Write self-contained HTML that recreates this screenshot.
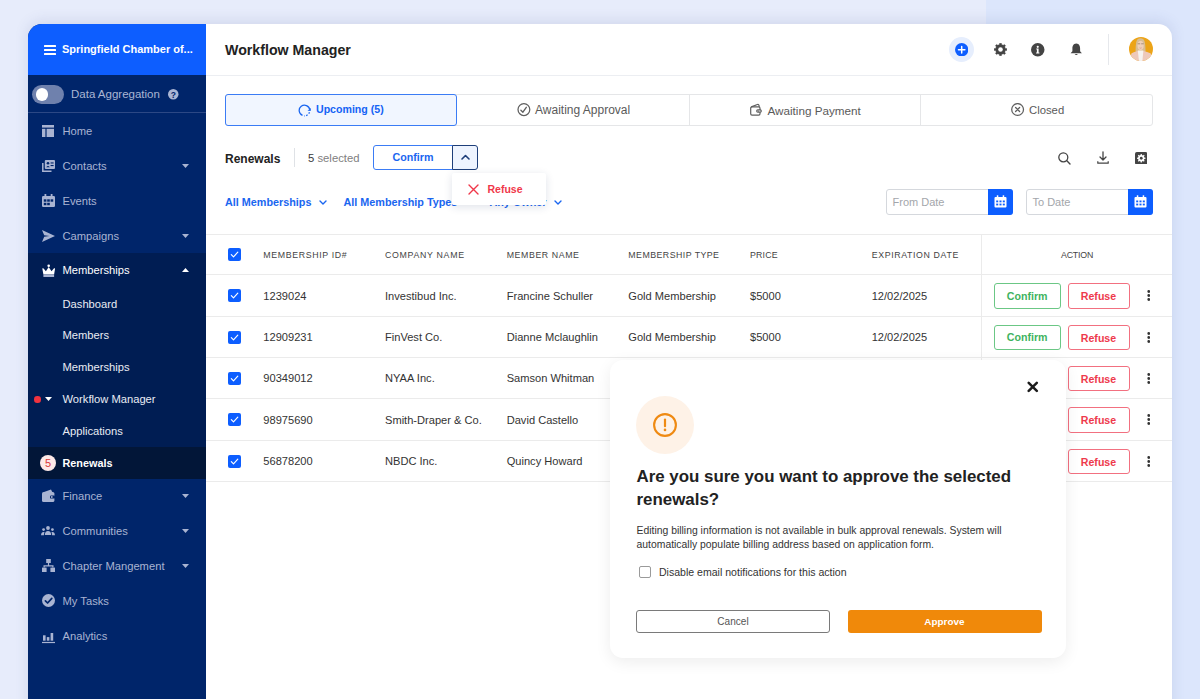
<!DOCTYPE html>
<html><head><meta charset="utf-8">
<style>
*{box-sizing:border-box;margin:0;padding:0}
html,body{width:1200px;height:699px;overflow:hidden}
body{font-family:"Liberation Sans",sans-serif;position:relative;background:#e7ecfb}
.a{position:absolute;display:block}
.t{position:absolute;white-space:nowrap;line-height:1}
</style></head><body>
<div class="a" style="left:0px;top:0px;width:1200px;height:699px;background:#e7ecfb"></div>
<div class="a" style="left:986px;top:0px;width:214px;height:699px;background:#dce6fc"></div>
<div class="a" style="left:28px;top:24px;width:1144px;height:700px;background:#fff;border-radius:14px;box-shadow:0 -3px 14px rgba(60,80,140,.13)"></div>
<div class="a" style="left:28px;top:24px;width:178px;height:700px;background:#00256a;border-top-left-radius:14px"></div>
<div class="a" style="left:28px;top:24px;width:178px;height:51px;background:#0d5eff;border-top-left-radius:14px"></div>
<div class="a" style="left:44px;top:45px;width:12px;height:2.4px;background:#fff;border-radius:0.5px"></div>
<div class="a" style="left:44px;top:49px;width:12px;height:2.4px;background:#fff;border-radius:0.5px"></div>
<div class="a" style="left:44px;top:53px;width:12px;height:2.4px;background:#fff;border-radius:0.5px"></div>
<div class="t" style="left:62px;top:44.19px;font-size:11px;color:#fff;font-weight:bold;">Springfield Chamber of...</div>
<div class="a" style="left:32px;top:84.5px;width:32px;height:19px;background:#6f81ad;border-radius:10px"></div>
<div class="a" style="left:35.5px;top:88px;width:12.5px;height:12.5px;background:#fff;border-radius:50%"></div>
<div class="t" style="left:71px;top:88.77px;font-size:11.5px;color:#aab6d4;font-weight:normal;">Data Aggregation</div>
<svg class="a" style="left:168px;top:89px;" width="10.5" height="10.5" viewBox="0 0 10.5 10.5"><circle cx="5.25" cy="5.25" r="5.25" fill="#aab6d4"/><text x="5.25" y="8.6" font-size="8.5" font-weight="bold" text-anchor="middle" fill="#00236b" font-family="Liberation Sans">?</text></svg>
<div class="a" style="left:28px;top:112px;width:178px;height:1px;background:#2c4885"></div>
<div class="a" style="left:28px;top:253px;width:178px;height:194px;background:#001d53"></div>
<div class="a" style="left:28px;top:447px;width:178px;height:32px;background:#021638"></div>
<svg class="a" style="left:42px;top:124.5px;" width="12" height="12" viewBox="0 0 12 12"><rect x="0" y="0" width="12" height="2.6" fill="#a9b4d2"/><rect x="0" y="3.8" width="3.4" height="8.2" fill="#a9b4d2"/><rect x="4.6" y="3.8" width="7.4" height="8.2" fill="#a9b4d2"/></svg>
<div class="t" style="left:62.5px;top:125.52px;font-size:11.2px;color:#a9b4d2;font-weight:normal;">Home</div>
<svg class="a" style="left:41.5px;top:159.5px;" width="13" height="12" viewBox="0 0 13 12"><path d="M0.8 3 V11.2 H9.5" stroke="#a9b4d2" stroke-width="1.5" fill="none"/><rect x="2.8" y="0" width="10.2" height="9" rx="1" fill="#a9b4d2"/><circle cx="6" cy="3.3" r="1.3" fill="#00256a"/><path d="M4.2 7.2 Q6 4.8 7.8 7.2Z" fill="#00256a"/><rect x="8.6" y="2.4" width="3" height="1.1" fill="#00256a"/><rect x="8.6" y="5" width="3" height="1.1" fill="#00256a"/></svg>
<div class="t" style="left:62.5px;top:160.52px;font-size:11.2px;color:#a9b4d2;font-weight:normal;">Contacts</div>
<svg class="a" style="left:41.5px;top:194.0px;" width="13" height="13" viewBox="0 0 13 13"><rect x="0" y="2" width="13" height="11" rx="1.2" fill="#a9b4d2"/><rect x="2.5" y="0" width="1.8" height="3.5" fill="#a9b4d2"/><rect x="8.7" y="0" width="1.8" height="3.5" fill="#a9b4d2"/><g fill="#00256a"><rect x="1.8" y="5.3" width="2.6" height="2.4"/><rect x="5.2" y="5.3" width="2.6" height="2.4"/><rect x="8.6" y="5.3" width="2.6" height="2.4"/><rect x="1.8" y="8.8" width="2.6" height="2.4"/><rect x="5.2" y="8.8" width="2.6" height="2.4"/></g></svg>
<div class="t" style="left:62.5px;top:195.52px;font-size:11.2px;color:#a9b4d2;font-weight:normal;">Events</div>
<svg class="a" style="left:41.5px;top:229.5px;" width="13" height="12" viewBox="0 0 13 12"><path d="M0 0 L13 6 L0 12 L2.2 6.8 L7.5 6 L2.2 5.2 Z" fill="#a9b4d2"/></svg>
<div class="t" style="left:62.5px;top:230.52px;font-size:11.2px;color:#a9b4d2;font-weight:normal;">Campaigns</div>
<svg class="a" style="left:181.5px;top:163.5px;" width="7" height="4" viewBox="0 0 7 4"><path d="M0 0 L3.5 4 L7 0Z" fill="#a9b4d2"/></svg>
<svg class="a" style="left:181.5px;top:233.5px;" width="7" height="4" viewBox="0 0 7 4"><path d="M0 0 L3.5 4 L7 0Z" fill="#a9b4d2"/></svg>
<svg class="a" style="left:41.5px;top:263.5px;" width="13.5" height="13.5" viewBox="0 0 13.5 13.5"><path d="M0.3 4.4 Q1 4 1.6 4.6 L3.9 7.2 L6.7 3.1 L9.5 7.2 L11.8 4.6 Q12.4 4 13.1 4.4 L12.1 10.6 H1.4 Z" fill="#fff"/><circle cx="6.7" cy="1.8" r="1.3" fill="#fff"/><rect x="1.4" y="10.6" width="10.7" height="2.8" fill="#a9b4d2"/></svg>
<div class="t" style="left:62.5px;top:265.02px;font-size:11.2px;color:#fff;font-weight:normal;">Memberships</div>
<svg class="a" style="left:181.5px;top:267.5px;" width="7" height="4" viewBox="0 0 7 4"><path d="M0 4 L3.5 0 L7 4Z" fill="#fff"/></svg>
<div class="t" style="left:62.5px;top:298.52px;font-size:11.2px;color:#e9ecf3;font-weight:normal;">Dashboard</div>
<div class="t" style="left:62.5px;top:330.02px;font-size:11.2px;color:#e9ecf3;font-weight:normal;">Members</div>
<div class="t" style="left:62.5px;top:362.02px;font-size:11.2px;color:#e9ecf3;font-weight:normal;">Memberships</div>
<div class="t" style="left:62.5px;top:393.52px;font-size:11.2px;color:#e9ecf3;font-weight:normal;">Workflow Manager</div>
<div class="t" style="left:62.5px;top:425.52px;font-size:11.2px;color:#e9ecf3;font-weight:normal;">Applications</div>
<div class="a" style="left:34px;top:396px;width:6.5px;height:6.5px;background:#f0333f;border-radius:50%"></div>
<svg class="a" style="left:44.8px;top:397px;" width="7" height="4" viewBox="0 0 7 4"><path d="M0 0 L3.5 4 L7 0Z" fill="#fff"/></svg>
<div class="a" style="left:40px;top:455px;width:16px;height:16px;background:#fde9e8;border-radius:50%"></div>
<div class="t" style="left:-252px;width:600px;text-align:center;top:457.69px;font-size:11px;color:#d93a3a;font-weight:normal;">5</div>
<div class="t" style="left:62.5px;top:457.82px;font-size:10.85px;color:#fff;font-weight:bold;">Renewals</div>
<svg class="a" style="left:41.5px;top:489.0px;" width="13" height="13" viewBox="0 0 13 13"><path d="M2 3 L9 0.5 L10.3 3Z" fill="#a9b4d2"/><rect x="0" y="3" width="12.4" height="10" rx="1.6" fill="#a9b4d2"/><rect x="8" y="6.4" width="5" height="3.2" rx="1.2" fill="#00256a"/><circle cx="9.8" cy="8" r="0.9" fill="#a9b4d2"/></svg>
<div class="t" style="left:62.5px;top:490.52px;font-size:11.2px;color:#a9b4d2;font-weight:normal;">Finance</div>
<svg class="a" style="left:41px;top:525.5px;" width="14" height="10" viewBox="0 0 14 10"><g fill="#a9b4d2"><circle cx="7" cy="2" r="1.9"/><circle cx="2.6" cy="3.6" r="1.4"/><circle cx="11.4" cy="3.6" r="1.4"/><path d="M3.8 9 Q4 5 7 5 Q10 5 10.2 9Z"/><path d="M0 9.2 Q0.3 6 2.6 6 Q3.6 6 3.6 6.6 Q2.8 7.6 2.9 9.2Z"/><path d="M14 9.2 Q13.7 6 11.4 6 Q10.4 6 10.4 6.6 Q11.2 7.6 11.1 9.2Z"/></g></svg>
<div class="t" style="left:62.5px;top:525.52px;font-size:11.2px;color:#a9b4d2;font-weight:normal;">Communities</div>
<svg class="a" style="left:41.5px;top:559.0px;" width="13" height="13" viewBox="0 0 13 13"><g fill="#a9b4d2"><rect x="4.2" y="0" width="4.6" height="4"/><rect x="0" y="8.6" width="4.6" height="4.4"/><rect x="8.4" y="8.6" width="4.6" height="4.4"/><path d="M5.9 4 h1.2 v2.2 h4.4 v2.4 h-1.2 v-1.2 h-7.6 v1.2 h-1.2 v-2.4 h4.4z"/></g></svg>
<div class="t" style="left:62.5px;top:560.52px;font-size:11.2px;color:#a9b4d2;font-weight:normal;">Chapter Mangement</div>
<svg class="a" style="left:41.5px;top:594.0px;" width="13" height="13" viewBox="0 0 13 13"><circle cx="6.5" cy="6.5" r="6.5" fill="#a9b4d2"/><path d="M3.4 6.8 L5.6 9 L9.8 4.4" stroke="#00256a" stroke-width="1.7" fill="none" stroke-linecap="round" stroke-linejoin="round"/></svg>
<div class="t" style="left:62.5px;top:595.52px;font-size:11.2px;color:#a9b4d2;font-weight:normal;">My Tasks</div>
<svg class="a" style="left:41.5px;top:629.5px;" width="13" height="14" viewBox="0 0 13 14"><g fill="#a9b4d2"><rect x="1" y="5.3" width="2.6" height="5.4"/><rect x="4.8" y="7.1" width="2.6" height="3.6"/><rect x="8.6" y="3" width="2.6" height="7.7"/><rect x="0" y="11.9" width="13" height="1.2"/></g></svg>
<div class="t" style="left:62.5px;top:630.52px;font-size:11.2px;color:#a9b4d2;font-weight:normal;">Analytics</div>
<svg class="a" style="left:181.5px;top:493.5px;" width="7" height="4" viewBox="0 0 7 4"><path d="M0 0 L3.5 4 L7 0Z" fill="#a9b4d2"/></svg>
<svg class="a" style="left:181.5px;top:528.5px;" width="7" height="4" viewBox="0 0 7 4"><path d="M0 0 L3.5 4 L7 0Z" fill="#a9b4d2"/></svg>
<svg class="a" style="left:181.5px;top:563.5px;" width="7" height="4" viewBox="0 0 7 4"><path d="M0 0 L3.5 4 L7 0Z" fill="#a9b4d2"/></svg>
<div class="t" style="left:225px;top:42.98px;font-size:14.2px;color:#222;font-weight:bold;">Workflow Manager</div>
<div class="a" style="left:206px;top:75px;width:966px;height:1px;background:#eceef2"></div>
<div class="a" style="left:949px;top:37px;width:25px;height:25px;background:#e6eefd;border-radius:50%"></div>
<svg class="a" style="left:955px;top:43px;" width="13.4" height="13.4" viewBox="0 0 13.4 13.4"><circle cx="6.7" cy="6.7" r="6.7" fill="#0d5eff"/><path d="M6.7 3.5 V9.9 M3.5 6.7 H9.9" stroke="#fff" stroke-width="1.5" stroke-linecap="round"/></svg>
<svg class="a" style="left:993.5px;top:43px;" width="13" height="13" viewBox="0 0 13 13"><path d="M11.38,5.43 L12.84,5.62 L12.84,7.38 L11.38,7.57 L10.71,9.20 L11.60,10.36 L10.36,11.60 L9.20,10.71 L7.57,11.38 L7.38,12.84 L5.62,12.84 L5.43,11.38 L3.80,10.71 L2.64,11.60 L1.40,10.36 L2.29,9.20 L1.62,7.57 L0.16,7.38 L0.16,5.62 L1.62,5.43 L2.29,3.80 L1.40,2.64 L2.64,1.40 L3.80,2.29 L5.43,1.62 L5.62,0.16 L7.38,0.16 L7.57,1.62 L9.20,2.29 L10.36,1.40 L11.60,2.64 L10.71,3.80Z" fill="#444" stroke="#444" stroke-width="0.4" stroke-linejoin="round"/><circle cx="6.5" cy="6.5" r="2.3" fill="#fff"/></svg>
<svg class="a" style="left:1031px;top:43px;" width="13.5" height="13.5" viewBox="0 0 13.5 13.5"><circle cx="6.75" cy="6.75" r="6.75" fill="#444"/><circle cx="6.75" cy="3.8" r="1.1" fill="#fff"/><path d="M5.3 5.6 H7.6 V9.6 H8.4 V10.6 H5.1 V9.6 H5.9 V6.6 H5.3Z" fill="#fff"/></svg>
<svg class="a" style="left:1070px;top:43px;" width="12.5" height="12.5" viewBox="0 0 12.5 12.5"><path d="M6.25 0.5 C3.2 0.8 2.4 3 2.4 5.5 V8.2 L0.6 10.3 H11.9 L10.1 8.2 V5.5 C10.1 3 9.3 0.8 6.25 0.5Z" fill="#444"/><path d="M4.6 11 Q6.25 13 7.9 11Z" fill="#444"/></svg>
<div class="a" style="left:1108px;top:34px;width:1px;height:31px;background:#e6e8ec"></div>
<svg class="a" style="left:1128.5px;top:37px;" width="24.2" height="24.2" viewBox="0 0 24.2 24.2"><defs><clipPath id="av"><circle cx="12" cy="12" r="12"/></clipPath></defs><g clip-path="url(#av)"><rect width="24" height="24" fill="#eca418"/><path d="M6.8 19 Q6 6 8.3 2.6 Q11.5 -0.2 14.7 2.6 Q17 6 16.4 19 Z" fill="#d8bd92"/><path d="M1.5 24 L2.3 16.6 Q4 15 8.6 14 L14.6 14 Q19.5 15 21.8 16.6 L23 24Z" fill="#eec9bb"/><path d="M8.8 13.4 L14.4 13.4 L13.4 24 L10 24Z" fill="#f6f3f1"/><ellipse cx="11.6" cy="8.4" rx="3.1" ry="4.5" fill="#efd0b9"/><path d="M8.7 6.8 h2.5 M12.2 6.8 h2.5" stroke="#7a6552" stroke-width="0.6"/><path d="M10.6 10.8 Q11.6 11.6 12.6 10.8" stroke="#d98c84" stroke-width="0.7" fill="none"/></g></svg>
<div class="a" style="left:225px;top:94px;width:928px;height:32px;border:1px solid #e5e6e8;border-radius:3px;background:#fff"></div>
<div class="a" style="left:689px;top:94px;width:1px;height:32px;background:#e5e6e8"></div>
<div class="a" style="left:920px;top:94px;width:1px;height:32px;background:#e5e6e8"></div>
<div class="a" style="left:225px;top:94px;width:232px;height:32px;border:1px solid #3b7cf5;border-radius:3px;background:#f1f6ff"></div>
<svg class="a" style="left:298px;top:103.5px;" width="13" height="13" viewBox="0 0 13 13"><path d="M4.51 11.41 A5.3 5.3 0 1 1 11.75 5.76" stroke="#1a66f0" stroke-width="1.3" fill="none"/><path d="M11.48 8.31 A5.3 5.3 0 0 1 6.04 11.78" stroke="#1a66f0" stroke-width="1.3" fill="none" stroke-dasharray="1.6 1.5"/><path d="M12.9 3.9 L12.7 6.9 L9.5 6.8Z" fill="#1a66f0"/></svg>
<div class="t" style="left:316px;top:104.33px;font-size:10.6px;color:#1463f5;font-weight:bold;">Upcoming (5)</div>
<svg class="a" style="left:516.5px;top:103px;" width="14" height="14" viewBox="0 0 14 14"><circle cx="6.9" cy="6.6" r="5.9" stroke="#5f5f5f" stroke-width="1.25" fill="none"/><path d="M3.9 7.3 L5.9 9.2 L9.3 4.3" stroke="#5f5f5f" stroke-width="1.35" fill="none" stroke-linecap="round" stroke-linejoin="round"/></svg>
<div class="t" style="left:535px;top:104.34px;font-size:12px;color:#5a5a5a;font-weight:normal;">Awaiting Approval</div>
<svg class="a" style="left:749px;top:103px;" width="14" height="14" viewBox="0 0 14 14"><rect x="1.7" y="3.9" width="9.3" height="8.2" rx="1.3" stroke="#5f5f5f" stroke-width="1.2" fill="none"/><path d="M2.2 3.9 L8.4 1.5 Q9.6 1.1 9.9 2.2 L10.3 3.9" stroke="#5f5f5f" stroke-width="1.2" fill="none" stroke-linejoin="round"/><rect x="7.7" y="6.9" width="4.6" height="2.3" rx="1.1" stroke="#5f5f5f" stroke-width="1.2" fill="#fff"/><circle cx="9.6" cy="8.05" r="0.6" fill="#5f5f5f"/></svg>
<div class="t" style="left:767.5px;top:104.60px;font-size:11.7px;color:#5a5a5a;font-weight:normal;">Awaiting Payment</div>
<svg class="a" style="left:1011px;top:103px;" width="14" height="14" viewBox="0 0 14 14"><circle cx="6.6" cy="6.5" r="5.9" stroke="#5f5f5f" stroke-width="1.25" fill="none"/><path d="M4.6 4.5 L8.6 8.5 M8.6 4.5 L4.6 8.5" stroke="#5f5f5f" stroke-width="1.3" stroke-linecap="round"/></svg>
<div class="t" style="left:1029px;top:104.93px;font-size:11.3px;color:#5a5a5a;font-weight:normal;">Closed</div>
<div class="t" style="left:225px;top:152.84px;font-size:12px;color:#222;font-weight:bold;">Renewals</div>
<div class="a" style="left:294px;top:148px;width:1px;height:19px;background:#dfe2e6"></div>
<div class="t" style="left:308px;top:153.43px;font-size:11.3px;color:#808080;font-weight:normal;"><span style="color:#3a3a3a">5</span> selected</div>
<div class="a" style="left:373px;top:145px;width:80px;height:25px;border:1px solid #3b7cf5;border-radius:3px 0 0 3px;background:#fff"></div>
<div class="t" style="left:113px;width:600px;text-align:center;top:152.44px;font-size:10.7px;color:#1a66f0;font-weight:bold;">Confirm</div>
<div class="a" style="left:452px;top:145px;width:26px;height:25px;border:1px solid #1e3f7a;border-radius:0 3px 3px 0;background:#eef4ff"></div>
<svg class="a" style="left:460.5px;top:154px;" width="9" height="6" viewBox="0 0 9 6"><path d="M1 5 L4.5 1.5 L8 5" stroke="#1e3f7a" stroke-width="1.6" fill="none" stroke-linecap="round" stroke-linejoin="round"/></svg>
<svg class="a" style="left:1057.5px;top:151.5px;" width="13" height="13" viewBox="0 0 13 13"><circle cx="5.3" cy="5.3" r="4.5" stroke="#444" stroke-width="1.3" fill="none"/><path d="M8.6 8.6 L12 12" stroke="#444" stroke-width="1.4" stroke-linecap="round"/></svg>
<svg class="a" style="left:1097px;top:151px;" width="12" height="13" viewBox="0 0 12 13"><path d="M6 0.8 V9 M3 6 L6 9 L9 6" stroke="#444" stroke-width="1.3" fill="none" stroke-linecap="round" stroke-linejoin="round"/><path d="M0.8 10.2 V12.2 H11.2 V10.2" stroke="#444" stroke-width="1.2" fill="none" stroke-linejoin="round"/></svg>
<svg class="a" style="left:1134.5px;top:151.5px;" width="12.5" height="12.5" viewBox="0 0 12.5 12.5"><rect width="12.5" height="12.5" rx="1.8" fill="#444"/><path d="M9.38,5.56 L10.51,5.66 L10.51,6.84 L9.38,6.94 L8.95,7.98 L9.68,8.85 L8.85,9.68 L7.98,8.95 L6.94,9.38 L6.84,10.51 L5.66,10.51 L5.56,9.38 L4.52,8.95 L3.65,9.68 L2.82,8.85 L3.55,7.98 L3.12,6.94 L1.99,6.84 L1.99,5.66 L3.12,5.56 L3.55,4.52 L2.82,3.65 L3.65,2.82 L4.52,3.55 L5.56,3.12 L5.66,1.99 L6.84,1.99 L6.94,3.12 L7.98,3.55 L8.85,2.82 L9.68,3.65 L8.95,4.52Z" fill="#fff"/><circle cx="6.25" cy="6.25" r="1.4" fill="#444"/></svg>
<div class="t" style="left:225px;top:197.36px;font-size:10.8px;color:#1a66f0;font-weight:bold;">All Memberships</div>
<svg class="a" style="left:319px;top:200px;" width="8" height="5" viewBox="0 0 8 5"><path d="M1 1 L4.0 4 L7 1" stroke="#1a66f0" stroke-width="1.4" fill="none" stroke-linecap="round" stroke-linejoin="round"/></svg>
<div class="t" style="left:343.5px;top:197.36px;font-size:10.8px;color:#1a66f0;font-weight:bold;">All Membership Types</div>
<div class="t" style="left:489.5px;top:197.36px;font-size:10.8px;color:#1a66f0;font-weight:bold;">Any Owner</div>
<svg class="a" style="left:554px;top:200px;" width="8" height="5" viewBox="0 0 8 5"><path d="M1 1 L4.0 4 L7 1" stroke="#1a66f0" stroke-width="1.4" fill="none" stroke-linecap="round" stroke-linejoin="round"/></svg>
<div class="a" style="left:886px;top:189px;width:127px;height:25.5px;border:1px solid #d5d8dd;border-radius:3px;background:#fff"></div>
<div class="t" style="left:892.5px;top:196.69px;font-size:11px;color:#a3a6ab;font-weight:normal;">From Date</div>
<div class="a" style="left:988px;top:189px;width:25px;height:25.5px;background:#0d5eff;border-radius:0 3px 3px 0"></div>
<svg class="a" style="left:994px;top:195px;" width="13" height="13" viewBox="0 0 13 13"><rect x="0.5" y="2" width="12" height="10.5" rx="1" fill="#fff"/><rect x="2.8" y="0.3" width="1.5" height="3" fill="#fff"/><rect x="8.7" y="0.3" width="1.5" height="3" fill="#fff"/><g fill="#0d5eff"><rect x="2.2" y="5.5" width="2" height="1.8"/><rect x="5.5" y="5.5" width="2" height="1.8"/><rect x="8.8" y="5.5" width="2" height="1.8"/><rect x="2.2" y="8.6" width="2" height="1.8"/><rect x="5.5" y="8.6" width="2" height="1.8"/><rect x="8.8" y="8.6" width="2" height="1.8"/></g></svg>
<div class="a" style="left:1026px;top:189px;width:127px;height:25.5px;border:1px solid #d5d8dd;border-radius:3px;background:#fff"></div>
<div class="t" style="left:1032.5px;top:196.69px;font-size:11px;color:#a3a6ab;font-weight:normal;">To Date</div>
<div class="a" style="left:1128px;top:189px;width:25px;height:25.5px;background:#0d5eff;border-radius:0 3px 3px 0"></div>
<svg class="a" style="left:1134px;top:195px;" width="13" height="13" viewBox="0 0 13 13"><rect x="0.5" y="2" width="12" height="10.5" rx="1" fill="#fff"/><rect x="2.8" y="0.3" width="1.5" height="3" fill="#fff"/><rect x="8.7" y="0.3" width="1.5" height="3" fill="#fff"/><g fill="#0d5eff"><rect x="2.2" y="5.5" width="2" height="1.8"/><rect x="5.5" y="5.5" width="2" height="1.8"/><rect x="8.8" y="5.5" width="2" height="1.8"/><rect x="2.2" y="8.6" width="2" height="1.8"/><rect x="5.5" y="8.6" width="2" height="1.8"/><rect x="8.8" y="8.6" width="2" height="1.8"/></g></svg>
<div class="a" style="left:206px;top:234px;width:966px;height:1px;background:#ebebeb"></div>
<div class="a" style="left:981px;top:234px;width:1px;height:248px;background:#ebebeb"></div>
<svg class="a" style="left:228px;top:248px;" width="13" height="13" viewBox="0 0 13 13"><rect width="13" height="13" rx="2" fill="#0d5eff"/><path d="M3.3 6.7 L5.5 8.9 L9.8 4.2" stroke="#fff" stroke-width="1.15" fill="none" stroke-linecap="round" stroke-linejoin="round"/></svg>
<div class="t" style="left:263.3px;top:251.15px;font-size:8.8px;color:#444;font-weight:normal;letter-spacing:0.64px">MEMBERSHIP ID#</div>
<div class="t" style="left:385px;top:251.15px;font-size:8.8px;color:#444;font-weight:normal;letter-spacing:0.68px">COMPANY NAME</div>
<div class="t" style="left:506.7px;top:251.15px;font-size:8.8px;color:#444;font-weight:normal;letter-spacing:0.58px">MEMBER NAME</div>
<div class="t" style="left:628.3px;top:251.15px;font-size:8.8px;color:#444;font-weight:normal;letter-spacing:0.46px">MEMBERSHIP TYPE</div>
<div class="t" style="left:750px;top:251.15px;font-size:8.8px;color:#444;font-weight:normal;letter-spacing:0.20px">PRICE</div>
<div class="t" style="left:871.7px;top:251.15px;font-size:8.8px;color:#444;font-weight:normal;letter-spacing:0.62px">EXPIRATION DATE</div>
<div class="t" style="left:1061px;top:251.15px;font-size:8.8px;color:#444;font-weight:normal;letter-spacing:-0.19px">ACTION</div>
<div class="a" style="left:206px;top:274px;width:966px;height:1px;background:#ebebeb"></div>
<div class="a" style="left:206px;top:316px;width:966px;height:1px;background:#ebebeb"></div>
<div class="a" style="left:206px;top:357px;width:966px;height:1px;background:#ebebeb"></div>
<div class="a" style="left:206px;top:398px;width:966px;height:1px;background:#ebebeb"></div>
<div class="a" style="left:206px;top:440px;width:966px;height:1px;background:#ebebeb"></div>
<div class="a" style="left:206px;top:481px;width:966px;height:1px;background:#ebebeb"></div>
<svg class="a" style="left:228px;top:289.4px;" width="13" height="13" viewBox="0 0 13 13"><rect width="13" height="13" rx="2" fill="#0d5eff"/><path d="M3.3 6.7 L5.5 8.9 L9.8 4.2" stroke="#fff" stroke-width="1.15" fill="none" stroke-linecap="round" stroke-linejoin="round"/></svg>
<div class="t" style="left:263.3px;top:290.60px;font-size:11.1px;color:#333;font-weight:normal;">1239024</div>
<div class="t" style="left:385px;top:290.60px;font-size:11.1px;color:#333;font-weight:normal;">Investibud Inc.</div>
<div class="t" style="left:506.7px;top:290.60px;font-size:11.1px;color:#333;font-weight:normal;">Francine Schuller</div>
<div class="t" style="left:628.3px;top:290.60px;font-size:11.1px;color:#333;font-weight:normal;">Gold Membership</div>
<div class="t" style="left:750px;top:290.60px;font-size:11.1px;color:#333;font-weight:normal;">$5000</div>
<div class="t" style="left:871.7px;top:290.60px;font-size:11.1px;color:#333;font-weight:normal;">12/02/2025</div>
<div class="a" style="left:993.5px;top:283.3px;width:67.5px;height:25.3px;border:1px solid #6bc785;border-radius:3px"></div>
<div class="t" style="left:727.2px;width:600px;text-align:center;top:290.98px;font-size:10.65px;color:#3fb35f;font-weight:bold;">Confirm</div>
<div class="a" style="left:1067.5px;top:283.3px;width:62px;height:25.3px;border:1px solid #f27080;border-radius:3px"></div>
<div class="t" style="left:798.5px;width:600px;text-align:center;top:291.03px;font-size:10.6px;color:#ee3a4c;font-weight:bold;">Refuse</div>
<svg class="a" style="left:1146.5px;top:290.2px;" width="3.5" height="11" viewBox="0 0 3.5 11"><circle cx="1.75" cy="1.5" r="1.4" fill="#333"/><circle cx="1.75" cy="5.5" r="1.4" fill="#333"/><circle cx="1.75" cy="9.5" r="1.4" fill="#333"/></svg>
<svg class="a" style="left:228px;top:330.9px;" width="13" height="13" viewBox="0 0 13 13"><rect width="13" height="13" rx="2" fill="#0d5eff"/><path d="M3.3 6.7 L5.5 8.9 L9.8 4.2" stroke="#fff" stroke-width="1.15" fill="none" stroke-linecap="round" stroke-linejoin="round"/></svg>
<div class="t" style="left:263.3px;top:332.10px;font-size:11.1px;color:#333;font-weight:normal;">12909231</div>
<div class="t" style="left:385px;top:332.10px;font-size:11.1px;color:#333;font-weight:normal;">FinVest Co.</div>
<div class="t" style="left:506.7px;top:332.10px;font-size:11.1px;color:#333;font-weight:normal;">Dianne Mclaughlin</div>
<div class="t" style="left:628.3px;top:332.10px;font-size:11.1px;color:#333;font-weight:normal;">Gold Membership</div>
<div class="t" style="left:750px;top:332.10px;font-size:11.1px;color:#333;font-weight:normal;">$5000</div>
<div class="t" style="left:871.7px;top:332.10px;font-size:11.1px;color:#333;font-weight:normal;">12/02/2025</div>
<div class="a" style="left:993.5px;top:324.8px;width:67.5px;height:25.3px;border:1px solid #6bc785;border-radius:3px"></div>
<div class="t" style="left:727.2px;width:600px;text-align:center;top:332.48px;font-size:10.65px;color:#3fb35f;font-weight:bold;">Confirm</div>
<div class="a" style="left:1067.5px;top:324.8px;width:62px;height:25.3px;border:1px solid #f27080;border-radius:3px"></div>
<div class="t" style="left:798.5px;width:600px;text-align:center;top:332.53px;font-size:10.6px;color:#ee3a4c;font-weight:bold;">Refuse</div>
<svg class="a" style="left:1146.5px;top:331.7px;" width="3.5" height="11" viewBox="0 0 3.5 11"><circle cx="1.75" cy="1.5" r="1.4" fill="#333"/><circle cx="1.75" cy="5.5" r="1.4" fill="#333"/><circle cx="1.75" cy="9.5" r="1.4" fill="#333"/></svg>
<svg class="a" style="left:228px;top:371.9px;" width="13" height="13" viewBox="0 0 13 13"><rect width="13" height="13" rx="2" fill="#0d5eff"/><path d="M3.3 6.7 L5.5 8.9 L9.8 4.2" stroke="#fff" stroke-width="1.15" fill="none" stroke-linecap="round" stroke-linejoin="round"/></svg>
<div class="t" style="left:263.3px;top:373.10px;font-size:11.1px;color:#333;font-weight:normal;">90349012</div>
<div class="t" style="left:385px;top:373.10px;font-size:11.1px;color:#333;font-weight:normal;">NYAA Inc.</div>
<div class="t" style="left:506.7px;top:373.10px;font-size:11.1px;color:#333;font-weight:normal;">Samson Whitman</div>
<div class="a" style="left:1067.5px;top:365.8px;width:62px;height:25.3px;border:1px solid #f27080;border-radius:3px"></div>
<div class="t" style="left:798.5px;width:600px;text-align:center;top:373.53px;font-size:10.6px;color:#ee3a4c;font-weight:bold;">Refuse</div>
<svg class="a" style="left:1146.5px;top:372.7px;" width="3.5" height="11" viewBox="0 0 3.5 11"><circle cx="1.75" cy="1.5" r="1.4" fill="#333"/><circle cx="1.75" cy="5.5" r="1.4" fill="#333"/><circle cx="1.75" cy="9.5" r="1.4" fill="#333"/></svg>
<svg class="a" style="left:228px;top:413.4px;" width="13" height="13" viewBox="0 0 13 13"><rect width="13" height="13" rx="2" fill="#0d5eff"/><path d="M3.3 6.7 L5.5 8.9 L9.8 4.2" stroke="#fff" stroke-width="1.15" fill="none" stroke-linecap="round" stroke-linejoin="round"/></svg>
<div class="t" style="left:263.3px;top:414.60px;font-size:11.1px;color:#333;font-weight:normal;">98975690</div>
<div class="t" style="left:385px;top:414.60px;font-size:11.1px;color:#333;font-weight:normal;">Smith-Draper &amp; Co.</div>
<div class="t" style="left:506.7px;top:414.60px;font-size:11.1px;color:#333;font-weight:normal;">David Castello</div>
<div class="a" style="left:1067.5px;top:407.3px;width:62px;height:25.3px;border:1px solid #f27080;border-radius:3px"></div>
<div class="t" style="left:798.5px;width:600px;text-align:center;top:415.03px;font-size:10.6px;color:#ee3a4c;font-weight:bold;">Refuse</div>
<svg class="a" style="left:1146.5px;top:414.2px;" width="3.5" height="11" viewBox="0 0 3.5 11"><circle cx="1.75" cy="1.5" r="1.4" fill="#333"/><circle cx="1.75" cy="5.5" r="1.4" fill="#333"/><circle cx="1.75" cy="9.5" r="1.4" fill="#333"/></svg>
<svg class="a" style="left:228px;top:454.9px;" width="13" height="13" viewBox="0 0 13 13"><rect width="13" height="13" rx="2" fill="#0d5eff"/><path d="M3.3 6.7 L5.5 8.9 L9.8 4.2" stroke="#fff" stroke-width="1.15" fill="none" stroke-linecap="round" stroke-linejoin="round"/></svg>
<div class="t" style="left:263.3px;top:456.10px;font-size:11.1px;color:#333;font-weight:normal;">56878200</div>
<div class="t" style="left:385px;top:456.10px;font-size:11.1px;color:#333;font-weight:normal;">NBDC Inc.</div>
<div class="t" style="left:506.7px;top:456.10px;font-size:11.1px;color:#333;font-weight:normal;">Quincy Howard</div>
<div class="a" style="left:1067.5px;top:448.8px;width:62px;height:25.3px;border:1px solid #f27080;border-radius:3px"></div>
<div class="t" style="left:798.5px;width:600px;text-align:center;top:456.53px;font-size:10.6px;color:#ee3a4c;font-weight:bold;">Refuse</div>
<svg class="a" style="left:1146.5px;top:455.7px;" width="3.5" height="11" viewBox="0 0 3.5 11"><circle cx="1.75" cy="1.5" r="1.4" fill="#333"/><circle cx="1.75" cy="5.5" r="1.4" fill="#333"/><circle cx="1.75" cy="9.5" r="1.4" fill="#333"/></svg>
<div class="a" style="left:452px;top:173px;width:94px;height:32px;background:#fff;border-radius:2px;box-shadow:0 2px 8px rgba(30,50,100,.14)"></div>
<svg class="a" style="left:467.5px;top:183.5px;" width="11" height="11" viewBox="0 0 11 11"><path d="M1 1 L10 10 M10 1 L1 10" stroke="#f0374a" stroke-width="1.4" stroke-linecap="round"/></svg>
<div class="t" style="left:487.5px;top:184.41px;font-size:10.5px;color:#f0374a;font-weight:bold;">Refuse</div>
<div class="a" style="left:610px;top:359.5px;width:456px;height:298px;background:#fff;border-radius:13px;box-shadow:0 4px 16px rgba(0,0,0,.075)"></div>
<svg class="a" style="left:1027px;top:381px;" width="11.5" height="11.5" viewBox="0 0 11.5 11.5"><path d="M1.7 1.8 L9.8 9.9 M9.8 1.8 L1.7 9.9" stroke="#1c1c1c" stroke-width="2.5" stroke-linecap="round"/></svg>
<div class="a" style="left:636px;top:395.7px;width:58px;height:58px;background:#fef2e7;border-radius:50%"></div>
<svg class="a" style="left:653px;top:412.6px;" width="24" height="24" viewBox="0 0 24 24"><circle cx="12" cy="12" r="10.9" stroke="#ef8a12" stroke-width="2.1" fill="none"/><path d="M12 6.5 V13.2" stroke="#ef8a12" stroke-width="2.2" stroke-linecap="round"/><circle cx="12" cy="16.9" r="1.3" fill="#ef8a12"/></svg>
<div class="t" style="left:636.5px;top:468.69px;font-size:16.9px;color:#222;font-weight:bold;">Are you sure you want to approve the selected</div>
<div class="t" style="left:636.5px;top:491.69px;font-size:16.9px;color:#222;font-weight:bold;">renewals?</div>
<div class="t" style="left:636.5px;top:525.80px;font-size:10.4px;color:#333;font-weight:normal;">Editing billing information is not available in bulk approval renewals. System will</div>
<div class="t" style="left:636.5px;top:539.70px;font-size:10.4px;color:#333;font-weight:normal;">automatically populate billing address based on application form.</div>
<div class="a" style="left:639.2px;top:566.3px;width:11.5px;height:11.5px;border:1px solid #9a9a9a;border-radius:2px;background:#fff"></div>
<div class="t" style="left:659px;top:567.07px;font-size:10.55px;color:#333;font-weight:normal;">Disable email notifications for this action</div>
<div class="a" style="left:636px;top:609.5px;width:194px;height:23px;border:1px solid #7a7a7a;border-radius:3px;background:#fff"></div>
<div class="t" style="left:433px;width:600px;text-align:center;top:617.19px;font-size:10.05px;color:#555;font-weight:normal;">Cancel</div>
<div class="a" style="left:847.5px;top:609.5px;width:194px;height:23px;background:#f0890a;border-radius:3px"></div>
<div class="t" style="left:644.4px;width:600px;text-align:center;top:616.62px;font-size:9.9px;color:#fff;font-weight:bold;">Approve</div>
</body></html>
